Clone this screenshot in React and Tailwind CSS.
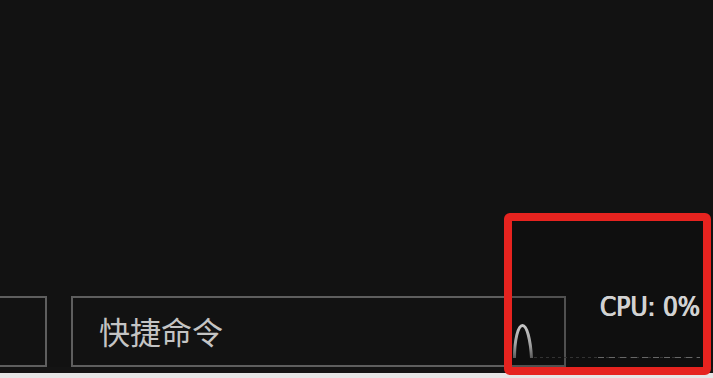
import React from "react";

export default function App() {
  return (
    <div className="relative w-[713px] h-[378px] overflow-hidden bg-[#121212] flex flex-col">
      <div className="flex-1" />
      <div className="flex items-stretch h-[71px]">
        <div className="w-[49px] ml-[-2px] border-2 border-[#5e5e5e]" />
        <div className="ml-[24px] w-[495px] border-2 border-[#5e5e5e] flex items-center pl-[26px] pb-[2px]">
          <span
            className="text-[31px] leading-none text-[#c4c4c4]"
            style={{ fontFamily: '"Noto Sans CJK SC", "Noto Sans", sans-serif' }}
          >
            快捷命令
          </span>
        </div>
        <div className="flex-1 flex justify-end items-start pr-[13px]">
          <span
            className="text-[26px] leading-none text-[#f7f7f7] mt-[-2px] [text-shadow:0.5px_0_0_#f7f7f7,-0.5px_0_0_#f7f7f7]"
            style={{ fontFamily: '"DejaVu Sans Condensed", "DejaVu Sans", sans-serif' }}
          >
            CPU: 0%
          </span>
        </div>
      </div>
      <div className="h-[6px] bg-[#141414]" />
      <div className="h-[5px] bg-[#e6e6e6]" />

      {/* CPU graph */}
      <svg className="absolute left-[510px] top-[320px]" width="195" height="42" viewBox="0 0 195 42">
        <defs>
          <linearGradient id="g" x1="0" y1="0" x2="0" y2="1">
            <stop offset="0" stopColor="#e8e8e8" />
            <stop offset="0.6" stopColor="#bdbdbd" />
            <stop offset="1" stopColor="#6a6a6a" />
          </linearGradient>
        </defs>
        <path
          d="M4.5 38 C4.5 20 8 5.5 12.5 5.5 C17 5.5 20.5 20 21.5 38"
          fill="none"
          stroke="url(#g)"
          strokeWidth="3"
        />
        <line x1="24" y1="37.5" x2="190" y2="37.5" stroke="#3c3c3c" strokeWidth="1" strokeDasharray="3 3" />
        <line x1="88" y1="37.5" x2="190" y2="37.5" stroke="#7a7a7a" strokeWidth="1" strokeDasharray="6 5" />
      </svg>

      {/* red highlight */}
      <div className="absolute left-[504px] top-[213px] w-[207px] h-[162px] border-[8px] border-[#e6231f] rounded-[6px] bg-[rgba(0,0,0,0.15)]" />
    </div>
  );
}
